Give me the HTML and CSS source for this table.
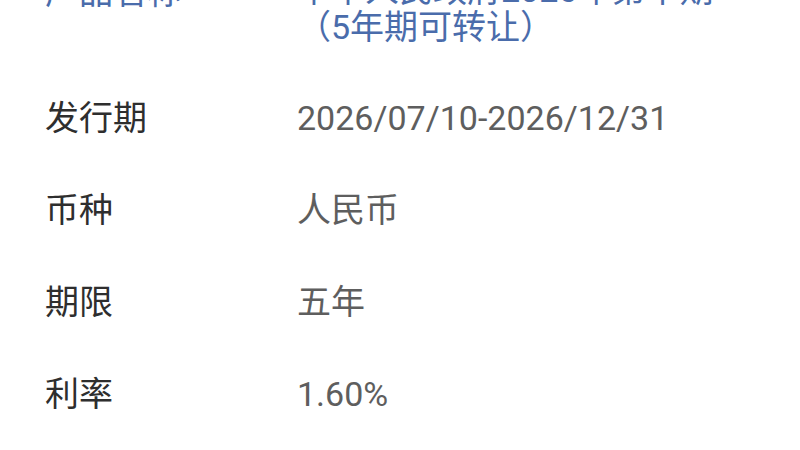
FILE: index.html
```html
<!DOCTYPE html>
<html lang="zh-CN">
<head>
<meta charset="utf-8">
<title>产品详情</title>
<link rel="stylesheet" href="styles.css">
</head>
<body>
<div class="sheet">
  <div class="row row-name">
    <div class="label label-blue">产品名称</div>
    <div class="value value-blue">
      <div class="line">中华人民政府2026年第十期</div>
      <div class="line">（5年期可转让）</div>
    </div>
  </div>
  <div class="row">
    <div class="label">发行期</div>
    <div class="value">2026/07/10-2026/12/31</div>
  </div>
  <div class="row">
    <div class="label">币种</div>
    <div class="value">人民币</div>
  </div>
  <div class="row">
    <div class="label">期限</div>
    <div class="value">五年</div>
  </div>
  <div class="row">
    <div class="label">利率</div>
    <div class="value">1.60%</div>
  </div>
</div>
</body>
</html>
```
FILE: styles.css
```css
html, body {
  margin: 0;
  padding: 0;
  background: #ffffff;
  overflow: hidden;
}
body {
  width: 800px;
  height: 450px;
  font-family: Roboto, "Noto Sans CJK SC", sans-serif;
}
.sheet {
  display: flex;
  flex-direction: column;
  margin-top: -54px;
  padding-left: 45px;
}
.row {
  display: flex;
  align-items: flex-start;
  padding: 26px 0;
  font-size: 34px;
  line-height: 40px;
}
.row-name {
  padding-bottom: 26px;
}
.label {
  width: 252px;
  flex: none;
  color: #2e2e2e;
}
.value {
  color: #5e5e5e;
}
.label-blue,
.value-blue {
  color: #4a6cab;
}
.value-blue .line {
  line-height: 37px;
}
```
